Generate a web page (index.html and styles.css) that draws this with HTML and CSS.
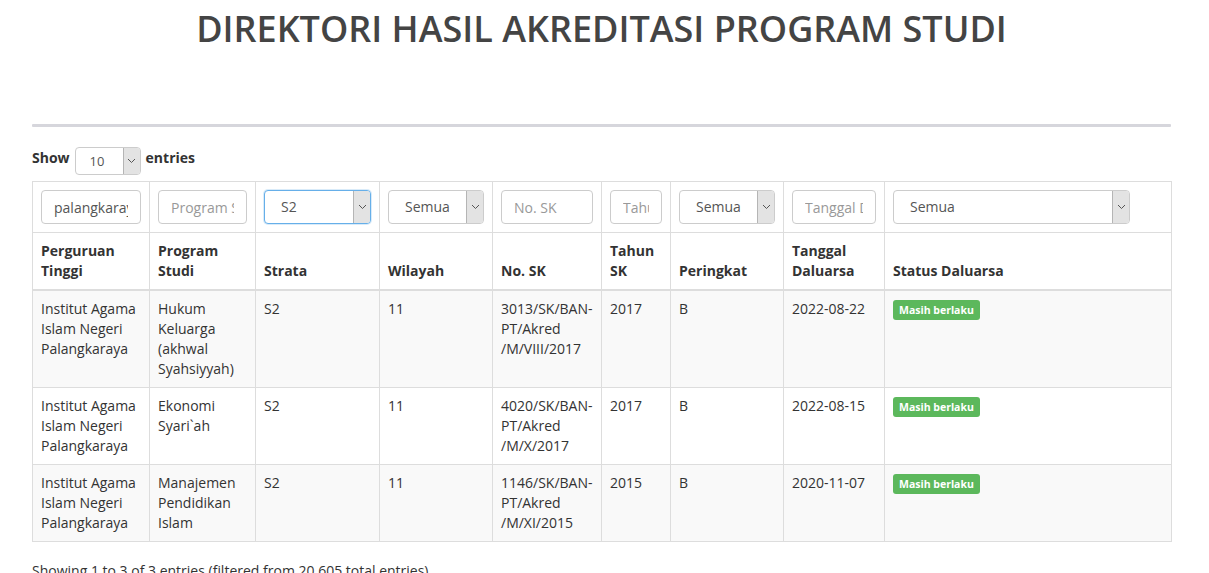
FILE: index.html
```html
<!DOCTYPE html>
<html>
<head>
<meta charset="utf-8">
<link rel="stylesheet" href="styles.css">
</head>
<body>
<div class="container">
  <h1 class="title">DIREKTORI HASIL AKREDITASI PROGRAM STUDI</h1>
  <div class="rule"></div>
  <div class="length">
    <span class="lbl">Show</span>
    <div class="sel sel-len"><span class="val">10</span><span class="arrow"><svg width="9" height="6" viewBox="0 0 9 6"><path d="M1 1l3.5 3.5L8 1" fill="none" stroke="#555" stroke-width="1"/></svg></span></div>
    <span class="lbl">entries</span>
  </div>
  <table class="grid">
    <colgroup>
      <col class="c1"><col class="c2"><col class="c3"><col class="c4"><col class="c5"><col class="c6"><col class="c7"><col class="c8"><col class="c9">
    </colgroup>
    <thead>
      <tr class="filters">
        <td><input class="inp w100" value="palangkaraya"></td>
        <td><input class="inp w89" placeholder="Program Studi"></td>
        <td><div class="sel focus w107"><span class="val">S2</span><span class="arrow"><svg width="9" height="6" viewBox="0 0 9 6"><path d="M1 1l3.5 3.5L8 1" fill="none" stroke="#555" stroke-width="1"/></svg></span></div></td>
        <td><div class="sel w96"><span class="val">Semua</span><span class="arrow"><svg width="9" height="6" viewBox="0 0 9 6"><path d="M1 1l3.5 3.5L8 1" fill="none" stroke="#555" stroke-width="1"/></svg></span></div></td>
        <td><input class="inp w92" placeholder="No. SK"></td>
        <td><input class="inp w52" placeholder="Tahun SK"></td>
        <td><div class="sel w96"><span class="val">Semua</span><span class="arrow"><svg width="9" height="6" viewBox="0 0 9 6"><path d="M1 1l3.5 3.5L8 1" fill="none" stroke="#555" stroke-width="1"/></svg></span></div></td>
        <td><input class="inp w84" placeholder="Tanggal Daluarsa"></td>
        <td><div class="sel w237"><span class="val">Semua</span><span class="arrow"><svg width="9" height="6" viewBox="0 0 9 6"><path d="M1 1l3.5 3.5L8 1" fill="none" stroke="#555" stroke-width="1"/></svg></span></div></td>
      </tr>
      <tr class="heads">
        <th>Perguruan Tinggi</th>
        <th>Program Studi</th>
        <th>Strata</th>
        <th>Wilayah</th>
        <th>No. SK</th>
        <th>Tahun SK</th>
        <th>Peringkat</th>
        <th>Tanggal Daluarsa</th>
        <th>Status Daluarsa</th>
      </tr>
    </thead>
    <tbody>
      <tr class="odd">
        <td>Institut Agama Islam Negeri Palangkaraya</td>
        <td>Hukum Keluarga (akhwal Syahsiyyah)</td>
        <td>S2</td>
        <td>11</td>
        <td>3013/SK/BAN-PT/Akred /M/VIII/2017</td>
        <td>2017</td>
        <td>B</td>
        <td>2022-08-22</td>
        <td><span class="badge">Masih berlaku</span></td>
      </tr>
      <tr>
        <td>Institut Agama Islam Negeri Palangkaraya</td>
        <td>Ekonomi Syari`ah</td>
        <td>S2</td>
        <td>11</td>
        <td>4020/SK/BAN-PT/Akred /M/X/2017</td>
        <td>2017</td>
        <td>B</td>
        <td>2022-08-15</td>
        <td><span class="badge">Masih berlaku</span></td>
      </tr>
      <tr class="odd">
        <td>Institut Agama Islam Negeri Palangkaraya</td>
        <td>Manajemen Pendidikan Islam</td>
        <td>S2</td>
        <td>11</td>
        <td>1146/SK/BAN-PT/Akred /M/XI/2015</td>
        <td>2015</td>
        <td>B</td>
        <td>2020-11-07</td>
        <td><span class="badge">Masih berlaku</span></td>
      </tr>
    </tbody>
  </table>
  <p class="info">Showing 1 to 3 of 3 entries (filtered from 20,605 total entries)</p>
</div>
</body>
</html>
```
FILE: styles.css
```css
* { box-sizing: border-box; }
html, body { margin: 0; padding: 0; background: #fff; }
body {
  font-family: "Open Sans", "DejaVu Sans", sans-serif;
  font-size: 14px;
  line-height: 20px;
  color: #333;
}
.container {
  width: 1139px;
  margin-left: 32px;
}
.title {
  margin: 0;
  padding-top: 6px;
  text-align: center;
  font-size: 36px;
  line-height: 46px;
  font-weight: 600;
  color: #444;
}
.rule {
  margin-top: 72px;
  height: 3px;
  background: #d6d6dc;
  border-radius: 1px;
}
.length {
  display: flex;
  align-items: flex-start;
  gap: 4px;
  margin-top: 20px;
  height: 28px;
}
.lbl { font-weight: 700; line-height: 22px; }
.sel {
  display: flex;
  align-items: stretch;
  height: 34px;
  border: 1px solid #ccc;
  border-radius: 4px;
  background: #fff;
  overflow: hidden;
}
.sel .val {
  flex: 1;
  display: flex;
  align-items: center;
  padding-left: 16px;
  color: #555;
  white-space: nowrap;
}
.sel .arrow {
  width: 17px;
  flex: none;
  display: flex;
  align-items: center;
  justify-content: center;
  background: #e3e3e3;
  border-left: 1px solid #b5b5b5;
}
.sel.focus { border-color: #66afe9; box-shadow: 0 0 0 1px rgba(102,175,233,0.25); }
.sel-len { width: 66px; height: 28px; margin: 0 1px 0 1px; }
.sel-len .val { padding-left: 14px; font-size: 13px; }
.inp {
  display: block;
  height: 34px;
  padding: 6px 12px;
  border: 1px solid #ccc;
  border-radius: 4px;
  font-family: inherit;
  font-size: 14px;
  color: #555;
  background: #fff;
  outline: none;
}
.inp::placeholder { color: #999; }
.w100 { width: 100px; }
.w89 { width: 89px; }
.w107 { width: 107px; }
.w96 { width: 96px; }
.w92 { width: 92px; }
.w52 { width: 52px; }
.w84 { width: 84px; }
.w237 { width: 237px; }
.grid {
  margin-top: 6px;
  width: 1139px;
  table-layout: fixed;
  border-collapse: collapse;
}
.c1 { width: 117px; }
.c2 { width: 106px; }
.c3 { width: 124px; }
.c4 { width: 113px; }
.c5 { width: 109px; }
.c6 { width: 69px; }
.c7 { width: 113px; }
.c8 { width: 101px; }
.c9 { width: 287px; }
.grid td, .grid th {
  border: 1px solid #ddd;
  padding: 8px;
  vertical-align: top;
  text-align: left;
}
.grid .filters td { padding: 8px; }
.grid th {
  vertical-align: bottom;
  font-weight: 700;
  border-bottom: 2px solid #ddd;
}
.grid tbody tr.odd { background: #f9f9f9; }
.badge {
  display: inline-block;
  margin-top: 1px;
  padding: 4px 6px;
  font-size: 10.5px;
  line-height: 12px;
  font-weight: 700;
  color: #fff;
  background: #5cb85c;
  border-radius: 3px;
  white-space: nowrap;
}
.info { margin: 19px 0 0; }
```
